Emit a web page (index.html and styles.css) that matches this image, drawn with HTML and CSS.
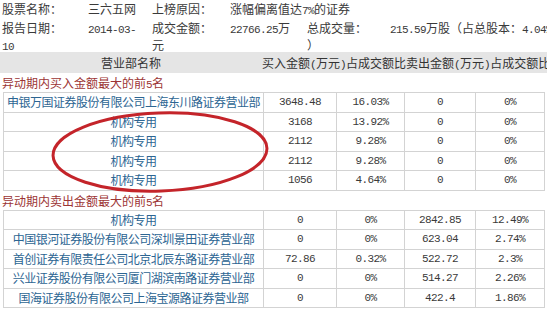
FILE: index.html
```html
<!DOCTYPE html>
<html lang="zh-CN">
<head>
<meta charset="utf-8">
<title>龙虎榜</title>
<link rel="stylesheet" href="styles.css">
</head>
<body>
<div class="page">
  <div class="info">
    <div class="line top">
      <div class="grp g1"><span class="lbl l1">股票名称：</span>三六五网</div>
      <div class="grp g2w"><span class="lbl l2">上榜原因：</span>涨幅偏离值达<span class="n">7%</span>的证券</div>
    </div>
    <div class="line">
      <div class="grp g1"><span class="lbl l1">报告日期：</span><span class="n">2014-03-</span><br><span class="n">10</span></div>
      <div class="grp g2"><span class="lbl l2">成交金额：</span><span class="n">22766.25</span>万<br>元</div>
      <div class="grp g3"><span class="lbl l3">总成交量：</span><span class="n">215.59</span>万股（占总股本：<span class="n">4.04%</span><br>）</div>
    </div>
  </div>

  <div class="head">
    <div class="h1">营业部名称</div>
    <div class="h2">买入金额<span class="n">(</span>万元<span class="n">)</span>占成交额比卖出金额<span class="n">(</span>万元<span class="n">)</span>占成交额比</div>
  </div>

  <div class="sec first">异动期内买入金额最大的前<span class="n">5</span>名</div>
  <table class="grid">
    <colgroup><col class="c1"><col class="c2"><col class="c3"><col class="c4"><col class="c5"></colgroup>
    <tr><td class="name">申银万国证券股份有限公司上海东川路证券营业部</td><td>3648.48</td><td>16.03%</td><td>0</td><td>0%</td></tr>
    <tr><td class="name">机构专用</td><td>3168</td><td>13.92%</td><td>0</td><td>0%</td></tr>
    <tr><td class="name">机构专用</td><td>2112</td><td>9.28%</td><td>0</td><td>0%</td></tr>
    <tr><td class="name">机构专用</td><td>2112</td><td>9.28%</td><td>0</td><td>0%</td></tr>
    <tr><td class="name">机构专用</td><td>1056</td><td>4.64%</td><td>0</td><td>0%</td></tr>
  </table>

  <div class="sec">异动期内卖出金额最大的前<span class="n">5</span>名</div>
  <table class="grid">
    <colgroup><col class="c1"><col class="c2"><col class="c3"><col class="c4"><col class="c5"></colgroup>
    <tr><td class="name">机构专用</td><td>0</td><td>0%</td><td>2842.85</td><td>12.49%</td></tr>
    <tr><td class="name">中国银河证券股份有限公司深圳景田证券营业部</td><td>0</td><td>0%</td><td>623.04</td><td>2.74%</td></tr>
    <tr><td class="name">首创证券有限责任公司北京北辰东路证券营业部</td><td>72.86</td><td>0.32%</td><td>522.72</td><td>2.3%</td></tr>
    <tr><td class="name">兴业证券股份有限公司厦门湖滨南路证券营业部</td><td>0</td><td>0%</td><td>514.27</td><td>2.26%</td></tr>
    <tr><td class="name">国海证券股份有限公司上海宝源路证券营业部</td><td>0</td><td>0%</td><td>422.4</td><td>1.86%</td></tr>
  </table>

  <svg class="mark" width="547" height="309" viewBox="0 0 547 309" aria-hidden="true">
    <ellipse cx="160" cy="152" rx="107" ry="39" transform="rotate(-2 160 152)" fill="none" stroke="#c4242a" stroke-width="3"/>
  </svg>
</div>
</body>
</html>
```

FILE: styles.css
```css
html, body {
  margin: 0;
  padding: 0;
  background: #ffffff;
}

.page {
  position: relative;
  width: 547px;
  height: 309px;
  overflow: hidden;
  font-family: "Noto Sans CJK SC", "Noto Sans", sans-serif;
  font-size: 12px;
  color: #3a3a3a;
}

.n {
  font-family: "Liberation Mono", "DejaVu Sans Mono", monospace;
  font-size: 11px;
  letter-spacing: -0.6px;
  line-height: 1;
}

/* top info */
.info {
  height: 52px;
  overflow: hidden;
}
.line {
  display: flex;
  line-height: 17px;
}
.line.top {
  height: 19px;
  line-height: 18px;
}
.grp {
  white-space: nowrap;
}
.grp br + * , .grp br {
  line-height: 1;
}
.g1 {
  width: 150px;
  padding-left: 2px;
}
.g2 {
  width: 155px;
}
.g2w {
  flex: 1;
}
.g3 {
  flex: 1;
  overflow: hidden;
}
.lbl {
  display: inline-block;
  line-height: 17px;
}
.l1 { width: 86px; }
.l2 { width: 78px; }
.l3 { width: 83px; }

/* header bar */
.head {
  display: flex;
  height: 21px;
  line-height: 21px;
  background: #e5e5e5;
  color: #333;
  white-space: nowrap;
  overflow: hidden;
}
.h1 {
  width: 262px;
  text-align: center;
  flex: none;
}
.h2 {
  flex: none;
}

/* section titles */
.sec {
  height: 19px;
  line-height: 19px;
  padding-left: 2px;
  color: #9c3434;
}
.sec.first {
  height: 19px;
  line-height: 20px;
}

/* data tables */
.grid {
  margin-left: 3px;
  width: 541px;
  border-collapse: collapse;
  table-layout: fixed;
}
.c1 { width: 260px; }
.c2 { width: 73px; }
.c3 { width: 68px; }
.c4 { width: 71px; }
.c5 { width: 69px; }

.grid td {
  height: 18.5px;
  padding: 0;
  border: 1px solid #d3d3d3;
  text-align: center;
  white-space: nowrap;
  overflow: hidden;
  font-family: "Liberation Mono", "DejaVu Sans Mono", monospace;
  font-size: 11px;
  letter-spacing: -0.6px;
  color: #3a3a3a;
  line-height: 18px;
}
.grid td.name {
  font-family: "Noto Sans CJK SC", "Noto Sans", sans-serif;
  font-size: 12px;
  letter-spacing: -0.5px;
  color: #2c6592;
}

.mark {
  position: absolute;
  left: 0;
  top: 0;
  pointer-events: none;
}
```
